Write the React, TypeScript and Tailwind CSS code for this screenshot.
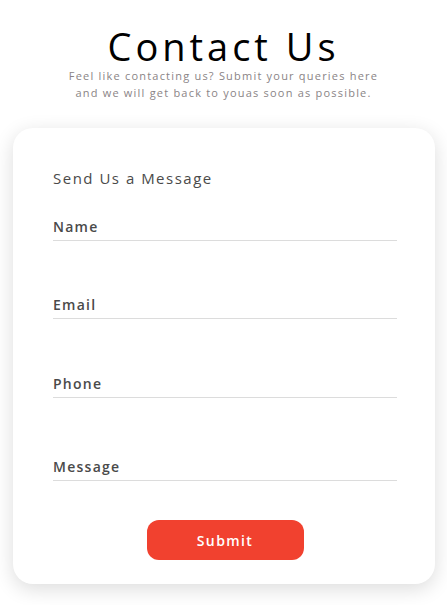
import React from 'react';

const fields = [
  { name: 'name', label: 'Name', mt: 'mt-[28px]' },
  { name: 'email', label: 'Email', mt: 'mt-[54px]' },
  { name: 'phone', label: 'Phone', mt: 'mt-[55px]' },
  { name: 'message', label: 'Message', mt: 'mt-[59px]' },
];

export default function App() {
  return (
    <div className="min-h-[605px] bg-white px-[13px] pt-[22px] font-['Open_Sans',sans-serif]">
      <div className="text-center">
        <h1 className="text-[38px] leading-[48px] tracking-[0.105em] font-medium text-black">Contact Us</h1>
        <p className="mx-auto mt-[-3px] w-[322px] text-[11px] leading-[17px] tracking-[0.11em] text-[#8a8486]">
          Feel like contacting us? Submit your queries here and we will get back to youas soon as possible.
        </p>
      </div>

      <form
        className="mt-[27px] mr-[-1px] rounded-[20px] bg-white pl-10 pr-[38px] pt-[39px] pb-6 shadow-[0_5px_20px_rgba(0,0,0,0.14)]"
        onSubmit={(e) => e.preventDefault()}
      >
        <h2 className="text-[15px] leading-[22px] tracking-[0.1em] font-medium text-[#4a4a4a]">Send Us a Message</h2>

        {fields.map((f) => (
          <div key={f.name} className={f.mt}>
            <input
              name={f.name}
              placeholder={f.label}
              className="block w-full border-b-[1.5px] border-[#dcdcdc] bg-transparent pb-[3px] text-[14px] leading-[20px] tracking-[0.09em] font-semibold text-[#4a4a4a] outline-none placeholder:text-[#4a4a4a]"
            />
          </div>
        ))}

        <div className="mt-[39px] flex justify-center">
          <button
            type="submit"
            className="h-10 w-[157px] rounded-xl bg-[#f1412f] text-[14px] font-semibold tracking-[0.1em] text-white"
          >
            Submit
          </button>
        </div>
      </form>
    </div>
  );
}
